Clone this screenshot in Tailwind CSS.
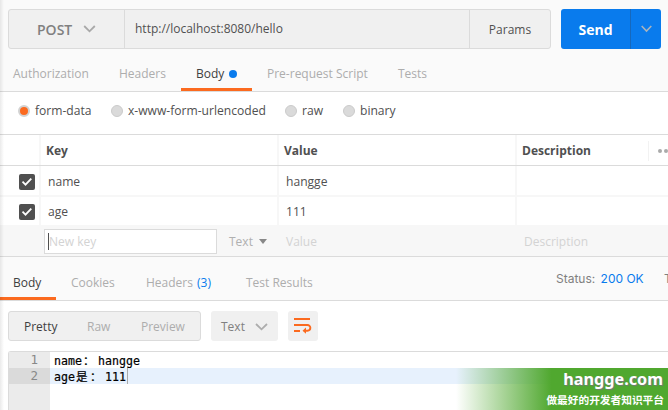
<!DOCTYPE html>
<html lang="zh">
<head>
<meta charset="utf-8">
<title>Request builder</title>
<script src="https://cdn.jsdelivr.net/npm/@tailwindcss/browser@4"></script>
</head>
<body class="relative h-[410px] w-[668px] overflow-hidden bg-white font-['Open_Sans','Noto_Sans_CJK_SC',sans-serif] text-[12px] leading-4 text-[#505050] whitespace-nowrap">
<main class="flex h-[410px] flex-col">
  <section class="h-[92px] shrink-0 border-b border-[#dbdbdb] bg-[#fafafa]">
    <div class="flex pt-[9px] pl-2">
      <div class="flex h-10 w-[543px] shrink-0 rounded-[3px] border border-[#dbdbdb] bg-[#f0f0f0]">
        <div class="flex w-[116px] items-center border-r border-[#dbdbdb] pt-[2px] pl-[28px] text-[14px] font-semibold text-[#808080]"><span class="w-[46px]">POST</span><svg class="-mt-[2px]" width="13" height="8" viewBox="0 0 12 8" fill="none" stroke="#a9a9a9" stroke-width="1.8"><path d="M.7 1 6 6.3 11.3 1"/></svg></div>
        <div class="flex flex-1 items-center pl-[10px] text-[12px]">http://localhost:8080/hello</div>
        <div class="flex w-[81px] items-center justify-center border-l border-[#dbdbdb] pt-[2px] text-[12px]">Params</div>
      </div>
      <div class="ml-[10px] flex h-10 w-[100px] rounded-[3px] bg-[#097bed] text-white">
        <div class="flex w-[70px] items-center justify-center border-r border-[#1668bc] pt-[2px] text-[14px] font-bold">Send</div>
        <div class="flex flex-1 items-center justify-center"><svg width="11" height="8" viewBox="0 0 11 8" fill="none" stroke="#a9b3bd" stroke-width="1.6"><path d="M.7 1 5.5 6 10.3 1"/></svg></div>
      </div>
    </div>
    <nav class="flex h-[42px] pt-[17px] pl-[13px] text-[12px] text-[#adadad]">
      <span class="w-[106px]">Authorization</span><span class="w-[62px]">Headers</span>
      <span class="flex h-[25px] w-[71px] items-start border-b-3 border-[#fb6a1f] pl-[15px] font-medium text-[#404040]">Body<i class="mt-1 ml-[5px] size-2 rounded-full bg-[#097bed]"></i></span>
      <span class="w-[131px] pl-[15px]">Pre-request Script</span><span class="pl-[15px]">Tests</span>
    </nav>
  </section>
  <section class="flex h-[43px] shrink-0 items-center border-b border-[#dbdbdb] pb-[5px] pl-[18px] text-[12.1px]">
    <span class="flex w-[93px] items-center gap-[5px]"><i class="size-3 rounded-full border-2 border-[#d2d2d2] bg-[#fb6a1f]"></i>form-data</span>
    <span class="flex w-[174px] items-center gap-[5px]"><i class="size-3 rounded-full border border-[#cbcbcb] bg-[#dadada]"></i>x-www-form-urlencoded</span>
    <span class="flex w-[58px] items-center gap-[5px]"><i class="size-3 rounded-full border border-[#cbcbcb] bg-[#dadada]"></i>raw</span>
    <span class="flex items-center gap-[5px]"><i class="size-3 rounded-full border border-[#cbcbcb] bg-[#dadada]"></i>binary</span>
  </section>
  <section class="h-[122px] shrink-0 border-b border-[#dbdbdb] bg-[#f7f7f7]">
    <div class="grid h-[31px] grid-cols-[39px_236px_236px_1fr] gap-x-[2px] border-b border-[#dbdbdb] text-[12px] font-bold *:flex *:items-center *:bg-white *:pt-px">
      <div></div><div class="pl-[5px]">Key</div><div class="pl-[5px]">Value</div>
      <div class="pl-[5px]"><span class="w-[126px]">Description</span><span class="flex h-5 items-center gap-[2px] border-l border-[#f2f2f2] pl-[9px]"><i class="size-1 rounded-full bg-[#aaa]"></i><i class="size-1 rounded-full bg-[#aaa]"></i></span></div>
    </div>
    <div class="grid grid-cols-[38px_236px_236px_1fr] grid-rows-[29px_28px] gap-x-[2px] gap-y-[2px] pl-px text-[12.1px] *:flex *:items-center *:bg-white *:pt-[2px]">
      <div class="-ml-px pl-[19px]"><svg width="16" height="16" viewBox="0 0 16 16"><rect width="16" height="16" rx="2" fill="#505050"/><path d="m3.5 7.7 3 3 5.8-6" fill="none" stroke="#fff" stroke-width="1.8"/></svg></div>
      <div class="pl-[7px]">name</div><div class="pl-[7px]">hangge</div><div></div>
      <div class="-ml-px pl-[19px]"><svg width="16" height="16" viewBox="0 0 16 16"><rect width="16" height="16" rx="2" fill="#505050"/><path d="m3.5 7.7 3 3 5.8-6" fill="none" stroke="#fff" stroke-width="1.8"/></svg></div>
      <div class="pl-[7px]">age</div><div class="pl-[7px]">111</div><div></div>
    </div>
    <div class="flex h-[31px] items-center pt-[2px] pl-[44px] text-[12px] text-[#d3d3d3]">
      <div class="flex h-[25px] w-[173px] items-center border border-[#dbdbdb] bg-white pl-[3px]"><i class="h-[17px] w-px bg-[#505050]"></i>New key</div>
      <span class="w-[30px] pl-3 text-[#b0b0b0]">Text</span><svg class="ml-3" width="8" height="5" viewBox="0 0 8 5"><path d="M0 0h8L4 5z" fill="#888"/></svg>
      <span class="ml-[19px] w-[238px]">Value</span><span>Description</span>
    </div>
  </section>
  <section class="flex h-[44px] shrink-0 border-b border-[#dbdbdb] bg-[#fafafa] text-[12px] text-[#adadad] *:shrink-0">
    <span class="h-[43px] w-[56px] border-b-3 border-[#fb6a1f] pt-[18px] pl-[13px] font-medium text-[#404040]">Body</span>
    <span class="w-[90px] pt-[18px] pl-[15px]">Cookies</span>
    <span class="w-[100px] pt-[18px]">Headers <b class="ml-px font-normal text-[#097bed]">(3)</b></span>
    <span class="w-[310px] pt-[18px]">Test Results</span>
    <span class="w-[108px] pt-[14px] font-['Inter'] text-[12px] text-[#808080]">Status: <b class="ml-[2px] font-normal text-[#097bed]">200 OK</b></span>
    <span class="pt-[14px] font-['Inter'] text-[#808080]">T</span>
  </section>
  <section class="flex h-[50px] shrink-0 pt-[10px] pl-2 text-[12px]">
    <div class="flex h-[30px] w-[193px] items-center rounded-[3px] border border-[#dbdbdb] bg-[#f0f0f0] pt-px pl-[15px] text-[#adadad]"><span class="w-[63px] font-medium text-[#404040]">Pretty</span><span class="w-[54px]">Raw</span><span>Preview</span></div>
    <div class="ml-[10px] flex h-[30px] w-[67px] items-center rounded-[3px] bg-[#f0f0f0] pt-px pl-[10px] text-[#808080]"><span class="w-[34px]">Text</span><svg width="13" height="8" viewBox="0 0 13 8" fill="none" stroke="#adadad" stroke-width="1.8"><path d="M1 1 6.5 6.3 12 1"/></svg></div>
    <div class="ml-[10px] grid size-[30px] place-items-center rounded-[3px] bg-[#f0f0f0] pb-px"><svg width="18" height="16" viewBox="0 0 18 16" fill="none" stroke="#fb6a1f" stroke-width="1.9"><path d="M0 1h16M0 7h13.5a2.8 2.8 0 0 1 0 5.7H10M0 13h6"/><path d="m12 9.5-3.5 3.2 3.5 3z" fill="#fb6a1f" stroke="none"/></svg></div>
  </section>
  <section class="ml-2 flex flex-1 rounded-tl-[3px] border-t border-l border-[#dbdbdb] font-['DejaVu_Sans_Mono','Noto_Sans_CJK_SC',monospace] text-[11.6px] text-black">
    <div class="w-[41px] bg-[#ebebeb] text-right text-[12.5px] text-[#888]"><div class="h-4 pr-[12px]">1</div><div class="h-4 bg-[#dadada] pr-[12px]">2</div></div>
    <div class="flex-1"><div class="flex h-4 pt-px pl-[4px] [-webkit-text-stroke:0.2px_black]"><span class="w-[29px]">name</span><span class="w-[15px]">：</span><span>hangge</span></div>
    <div class="flex h-4 bg-[#e7f1fd] pt-px pl-[4px] [-webkit-text-stroke:0.2px_black]"><span class="w-[22px]">age</span><span class="w-[14px]">是</span><span class="w-[15px]">：</span><span>111</span><i class="-mt-px ml-px h-4 w-px bg-[#aaa]"></i></div></div>
  </section>
</main>
<div class="pointer-events-none absolute inset-y-0 left-0 w-[4px] bg-linear-to-r from-black/8 to-transparent"></div>
<div class="absolute top-[368px] right-0 h-[42px] w-[212px] bg-linear-to-r from-[#50a82f]/0 to-[#50a82f] to-45% text-right font-bold text-white [text-shadow:1px_1px_1px_#777]">
  <div class="pr-[5px] font-['Noto_Sans'] text-[16.2px] leading-[23px]">hangge.com</div>
  <div class="pr-[4px] text-[10.7px] leading-[18px] [text-shadow:none]">做最好的开发者知识平台</div>
</div>
</body>
</html>
